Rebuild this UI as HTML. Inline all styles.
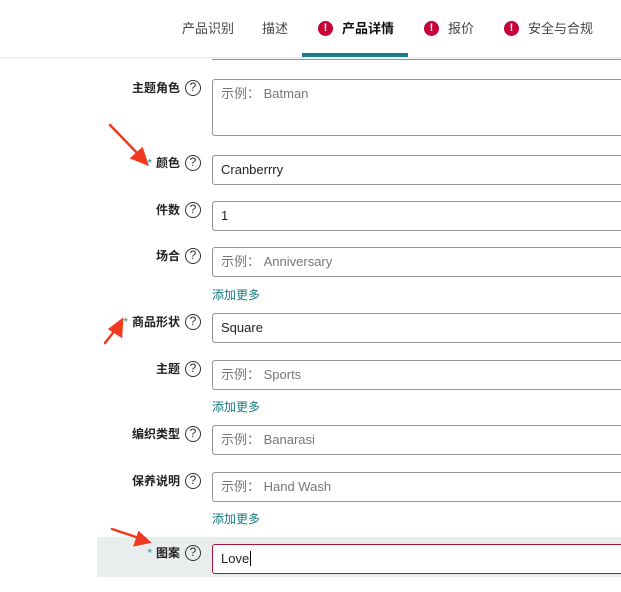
<!DOCTYPE html>
<html><head><meta charset="utf-8"><style>
*{margin:0;padding:0;box-sizing:border-box}
body{width:621px;height:592px;background:#fff;position:relative;overflow:hidden;font-family:"Liberation Sans","Noto Sans CJK SC",sans-serif;font-size:13px;color:#111}
.a{position:absolute}
.tab{position:absolute;top:21px;font-size:13px;color:#444;line-height:16px}
.err{position:absolute;top:21px;width:15px;height:15px;border-radius:50%;background:#c7003a;color:#fff;font-size:11px;font-weight:bold;text-align:center;line-height:15px}
.lbl{position:absolute;right:441px;font-size:12px;font-weight:bold;color:#222;line-height:14px;white-space:nowrap}
.q{position:absolute;left:185px;width:16px;height:16px;border:1.5px solid #333;border-radius:50%;font-size:12px;text-align:center;line-height:13px;color:#333}
.in{position:absolute;left:212px;width:420px;height:30px;border:1px solid #949494;border-radius:3px;padding-left:8px;line-height:28px;font-size:13px;color:#222;background:#fff}
.ph{color:#777}
.more{position:absolute;left:212px;font-size:12px;color:#1a7b82;line-height:14px}
.star{color:#2a8ba0;font-weight:normal;margin-right:4px}
</style></head><body>
<div class="a" style="left:0;top:0;width:621px;height:57px;background:#fff;box-shadow:0 1px 2px rgba(0,0,0,.12)"></div>
<div class="tab" style="left:182px">产品识别</div>
<div class="tab" style="left:262px">描述</div>
<div class="err" style="left:318px">!</div>
<div class="tab" style="left:342px;font-weight:bold;color:#111">产品详情</div>
<div class="err" style="left:424px">!</div>
<div class="tab" style="left:448px">报价</div>
<div class="err" style="left:504px">!</div>
<div class="tab" style="left:528px">安全与合规</div>
<div class="a" style="left:302px;top:53px;width:106px;height:4px;background:#1b7f8a"></div>
<div class="a" style="left:212px;top:57px;width:420px;height:3px;border-bottom:1px solid #949494"></div>

<div class="lbl" style="top:81px">主题角色</div><div class="q" style="top:80px">?</div>
<div class="in ph" style="top:79px;height:57px;line-height:28px">示例： Batman</div>

<div class="lbl" style="top:156px"><span class="star">*</span>颜色</div><div class="q" style="top:155px">?</div>
<div class="in" style="top:155px">Cranberrry</div>

<div class="lbl" style="top:203px">件数</div><div class="q" style="top:202px">?</div>
<div class="in" style="top:201px">1</div>

<div class="lbl" style="top:249px">场合</div><div class="q" style="top:248px">?</div>
<div class="in ph" style="top:247px">示例： Anniversary</div>
<div class="more" style="top:288px">添加更多</div>

<div class="lbl" style="top:315px"><span class="star">*</span>商品形状</div><div class="q" style="top:314px">?</div>
<div class="in" style="top:313px">Square</div>

<div class="lbl" style="top:362px">主题</div><div class="q" style="top:361px">?</div>
<div class="in ph" style="top:360px">示例： Sports</div>
<div class="more" style="top:400px">添加更多</div>

<div class="lbl" style="top:427px">编织类型</div><div class="q" style="top:426px">?</div>
<div class="in ph" style="top:425px">示例： Banarasi</div>

<div class="lbl" style="top:474px">保养说明</div><div class="q" style="top:473px">?</div>
<div class="in ph" style="top:472px">示例： Hand Wash</div>
<div class="more" style="top:512px">添加更多</div>

<div class="a" style="left:97px;top:537px;width:524px;height:40px;background:#eaeded"></div>
<div class="lbl" style="top:546px"><span class="star">*</span>图案</div><div class="q" style="top:545px">?</div>
<div class="in" style="top:544px;border:1.5px solid #a8123a">Love<span style="border-left:1px solid #000;margin-left:1px"></span></div>

<svg class="a" style="left:0;top:0" width="621" height="592">
<g fill="#f0391f" stroke="#f0391f" stroke-width="2.5" stroke-linecap="round">
<line x1="110" y1="125" x2="139" y2="155"/><polygon points="147,164 132,158 142,149"/>
<line x1="105" y1="343" x2="116" y2="329"/><polygon points="122,320 121,336 110,329"/>
<line x1="112" y1="529" x2="139" y2="538"/><polygon points="149,542 135,545 139,533"/>
</g></svg>
</body></html>
